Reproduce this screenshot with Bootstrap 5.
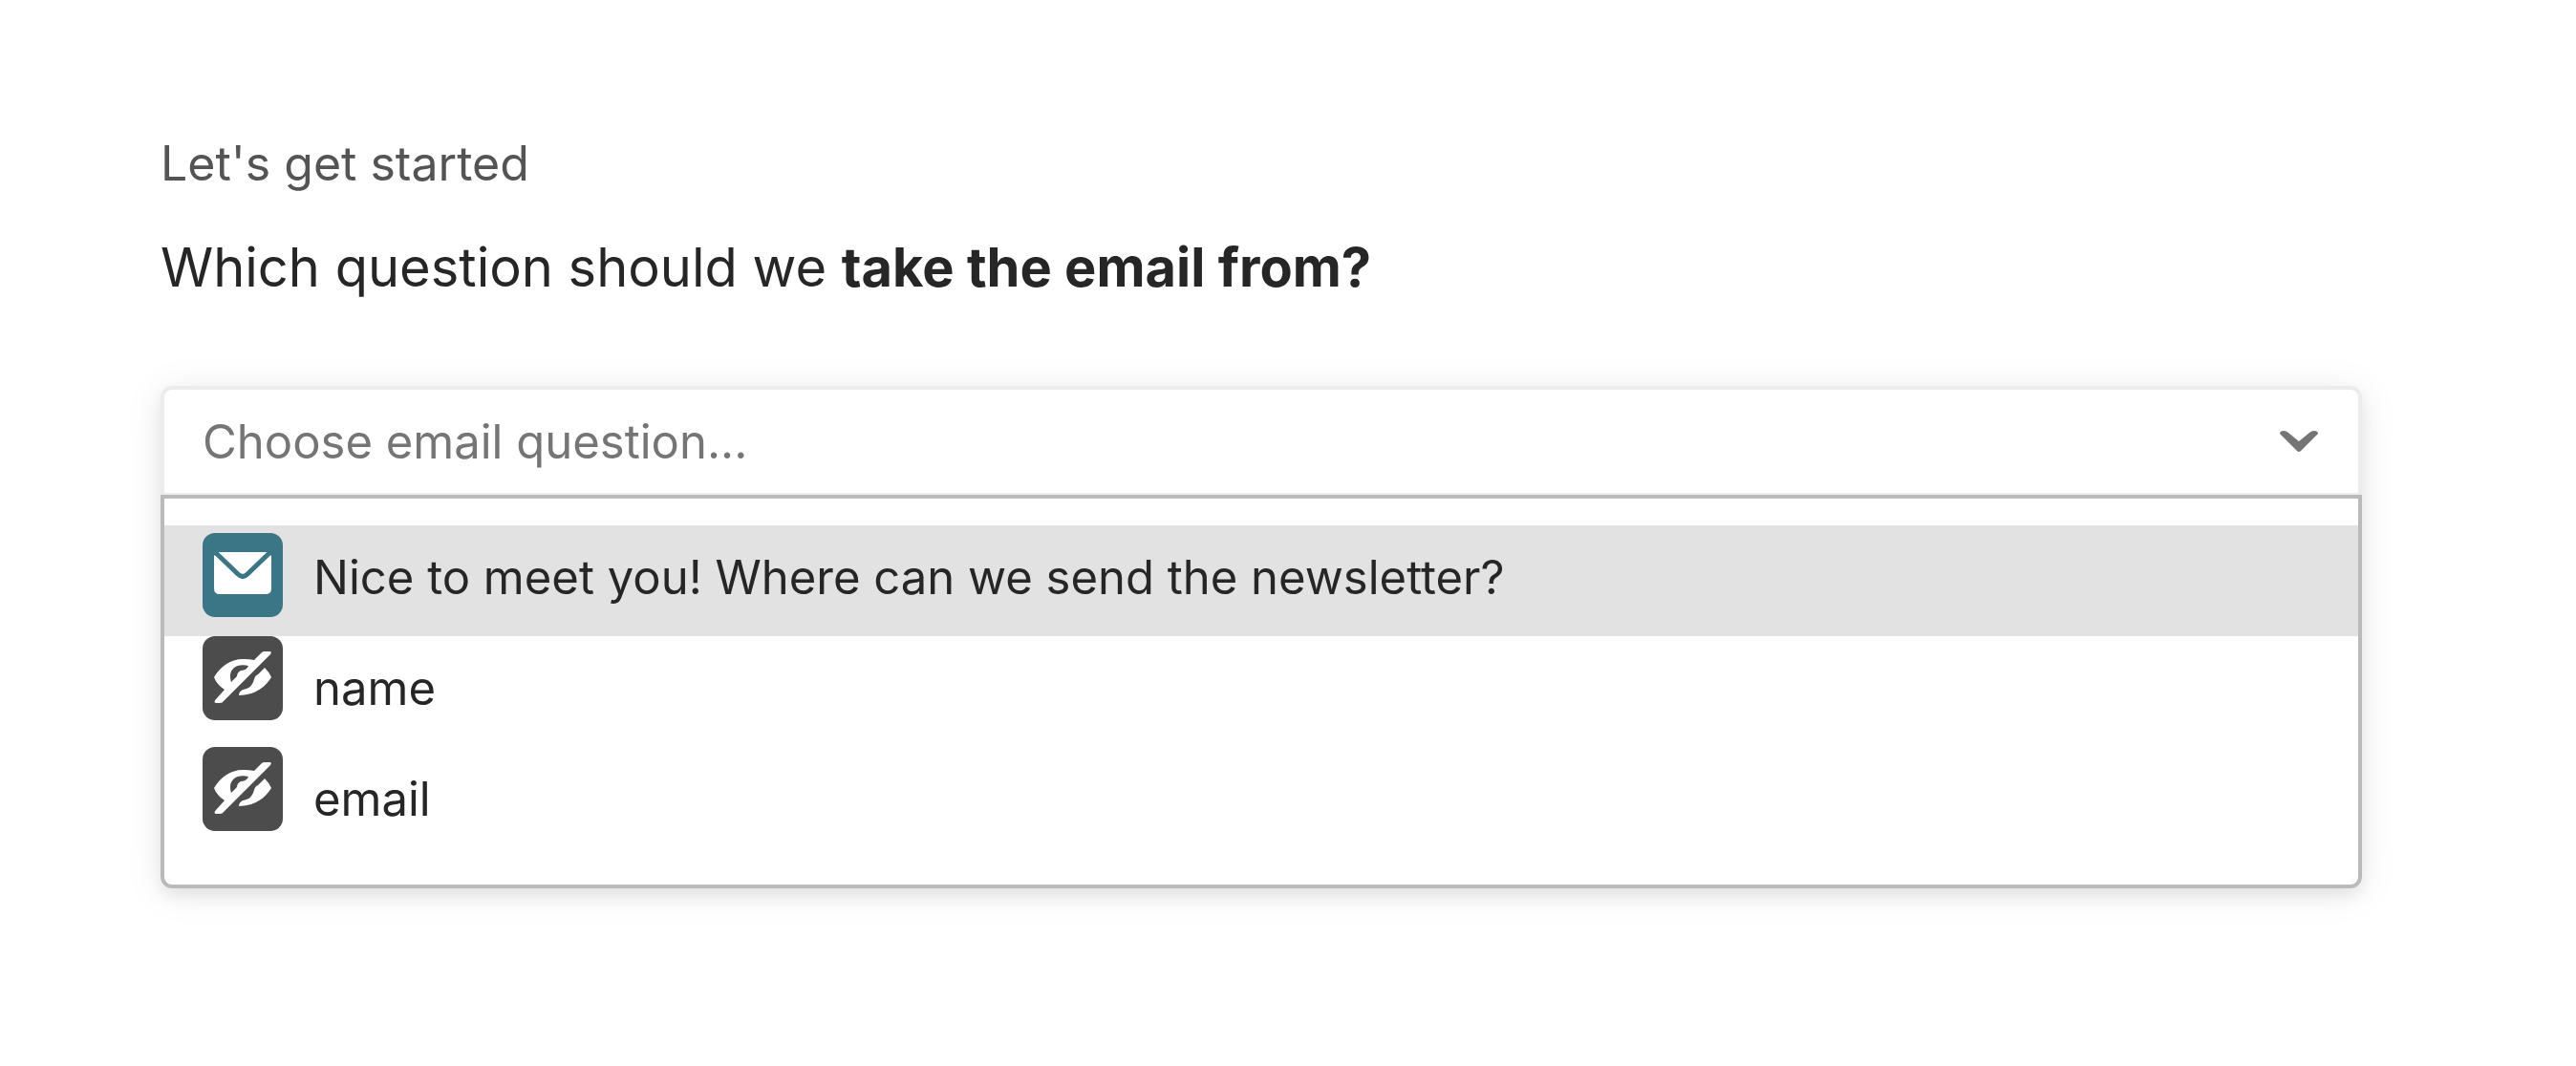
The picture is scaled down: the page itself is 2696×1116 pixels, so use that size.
<!DOCTYPE html>
<html lang="en">
<head>
<meta charset="utf-8">
<meta name="viewport" content="width=device-width, initial-scale=1">
<title>Choose email question</title>
<link href="https://cdn.jsdelivr.net/npm/bootstrap@5.3.0/dist/css/bootstrap.min.css" rel="stylesheet">
<style>
  body { font-family: Inter, "Liberation Sans", sans-serif; font-size: 49px; line-height: 70px; color: #262627; background: #fff; }
  .setup-step { padding: 136px 224px 136px 168px; }
  .step-intro { font-size: 50px; color: #545454; margin-bottom: 34px; }
  .step-title { font-size: 56px; line-height: 80px; font-weight: 400; color: #262627; margin-bottom: 84px; }
  .step-title strong { font-weight: 700; }
  .picker { border-radius: 12px; box-shadow: 0 4px 40px rgba(0, 0, 0, .08), 0 8px 16px rgba(0, 0, 0, .07); }
  .picker-field { height: 114px; background: #fff; border: 4px solid #ececec; border-bottom-width: 2px; border-radius: 12px 12px 0 0; padding: 2px 40px 0; }
  .picker-field .form-control { font-size: 49px; line-height: 70px; color: #262627; }
  .picker-field .form-control::placeholder { color: #757575; opacity: 1; }
  .picker-toggle { line-height: 0; }
  .picker-menu { --bs-list-group-border-radius: 0; background: #fff; border: 4px solid #bababa; border-radius: 0 0 12px 12px; padding: 28px 0; }
  .picker-option { height: 116px; padding: 0 40px; gap: 32px; color: #262627; font-size: 49px; line-height: 70px; }
  .picker-option.active { color: #262627; background: #e2e2e2; padding-top: 8px; }
  .picker-option span { margin-top: 20px; }
  .picker-option.active span { margin-top: 12px; }
</style>
</head>
<body>
<main class="setup-step">
  <p class="step-intro">Let's get started</p>
  <h1 class="step-title">Which question should we <strong>take the email from?</strong></h1>

  <div class="picker">
    <div class="picker-field d-flex align-items-center">
      <input class="form-control border-0 shadow-none bg-transparent p-0 flex-grow-1" type="text" role="combobox" aria-expanded="true" aria-controls="questions" aria-label="Email question" placeholder="Choose email question...">
      <button class="picker-toggle btn border-0 p-0" type="button" aria-label="Toggle question list">
        <svg width="44" height="28" viewBox="0 0 44 28" fill="#757575"><path d="M2 4Q3 2 6 2Q9 2 11 4L22 13 33 4Q35 2 38 2Q41 2 42 4Q42 6 40 7L24 23Q22 25 20 23L4 7Q2 6 2 4Z"/></svg>
      </button>
    </div>
    <div class="picker-menu list-group list-group-flush" id="questions" role="listbox">
      <button class="picker-option list-group-item list-group-item-action active border-0 d-flex align-items-start" type="button" role="option" aria-selected="true">
        <svg class="flex-shrink-0" width="84" height="88" viewBox="0 0 84 88" aria-hidden="true">
          <rect width="84" height="88" rx="13" fill="#3a7685"/>
          <path d="M16 20H68L72 24V58Q72 64 66 64H18Q12 64 12 58V24Z" fill="#fff"/>
          <path d="M12 19 37 43Q42 48 47 43L72 19" fill="none" stroke="#3a7685" stroke-width="5"/>
        </svg>
        <span>Nice to meet you! Where can we send the newsletter?</span>
      </button>
      <button class="picker-option list-group-item list-group-item-action border-0 d-flex align-items-start" type="button" role="option" aria-selected="false">
        <svg class="flex-shrink-0" width="84" height="88" viewBox="0 0 84 88" aria-hidden="true">
          <rect width="84" height="88" rx="13" fill="#4c4c4c"/>
          <g id="hidden-eye" fill="#fff">
            <path d="M54 25 62 17Q63 16 65 16H70Q73 16 71 19L22 68Q21 70 18 70H14Q11 69 14 66L23 56Q15 51 12 43C19 31 31 23 44 24Q49 24 54 25Z"/>
            <path d="M65 33Q70 38 72 43C65 55 52 62 38 62Q38 58 42 56C49 55 52 52 54 45Q55 41 58 40Z"/>
            <path d="M30 48C26 36 34 28 48 31Q46 36 40 36Q36 38 36 42Z" fill="#4c4c4c"/>
          </g>
        </svg>
        <span>name</span>
      </button>
      <button class="picker-option list-group-item list-group-item-action border-0 d-flex align-items-start" type="button" role="option" aria-selected="false">
        <svg class="flex-shrink-0" width="84" height="88" viewBox="0 0 84 88" aria-hidden="true">
          <rect width="84" height="88" rx="13" fill="#4c4c4c"/>
          <use href="#hidden-eye"/>
        </svg>
        <span>email</span>
      </button>
    </div>
  </div>
</main>
<script src="https://cdn.jsdelivr.net/npm/bootstrap@5.3.0/dist/js/bootstrap.bundle.min.js"></script>
</body>
</html>
